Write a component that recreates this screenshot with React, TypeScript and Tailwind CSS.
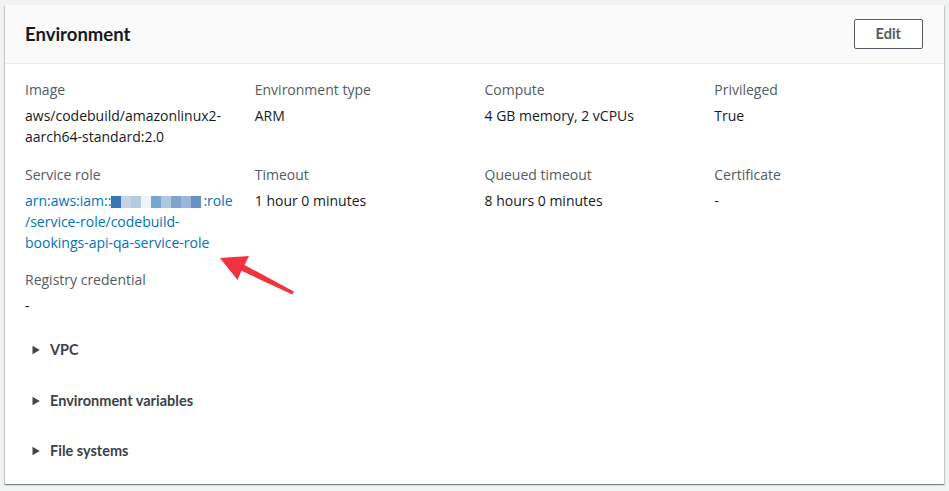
import React from "react";

const font = { fontFamily: '"Open Sans", "Noto Sans", Arial, sans-serif' };
const bold = { fontFamily: 'Lato, "Open Sans", Arial, sans-serif' };

function Field({ label, children }: { label: string; children: React.ReactNode }) {
  return (
    <div>
      <div className="text-[14px] leading-[22px] text-[#545b64] mb-[4px]">{label}</div>
      <div className="text-[14px] leading-[21px] text-[#16191f]">{children}</div>
    </div>
  );
}

function Expander({ label }: { label: string }) {
  return (
    <div className="flex items-center h-[22px]">
      <svg width="8" height="10" viewBox="0 0 8 10" className="ml-[7px] mr-[10px]">
        <path d="M0.5 0.8 L7.8 5 L0.5 9.2 Z" fill="#414750" />
      </svg>
      <span className="text-[14.5px] font-bold text-[#3b4148]" style={bold}>{label}</span>
    </div>
  );
}

const blocks = [
  "#3a76b6",
  "#c3d4e8",
  "#b6c9e1",
  "#eef3f9",
  "#78a5d0",
  "#abc7e2",
  "#81a2cc",
  "#9db6d8",
  "#6890c3",
];

export default function App() {
  return (
    <div className="relative bg-[#f2f3f3] h-[491px] pt-[5px] px-[5px]" style={font}>
      <div className="bg-white shadow-[0_1px_1px_0_rgba(0,28,36,0.3),1px_1px_1px_0_rgba(0,28,36,0.15),-1px_1px_1px_0_rgba(0,28,36,0.15)]">
        <div className="h-[59px] bg-[#fafafa] border-b border-[#eaeded] flex items-center justify-between pl-5 pr-[21px]">
          <h2 className="text-[18.5px] font-bold text-[#16191f] leading-[24px]" style={bold}>Environment</h2>
          <button
            className="h-[30px] px-[21px] border border-[#545b64] rounded-[2px] bg-white text-[14.5px] font-bold text-[#545b64] leading-none"
            style={bold}
          >
            Edit
          </button>
        </div>
        <div className="px-5 pt-[15px] pb-[22px]">
          <div className="grid grid-cols-4 gap-x-5 gap-y-[16.5px]">
            <Field label="Image">
              aws/codebuild/amazonlinux2-
              <br />
              aarch64-standard:2.0
            </Field>
            <Field label="Environment type">ARM</Field>
            <Field label="Compute">4 GB memory, 2 vCPUs</Field>
            <Field label="Privileged">True</Field>
            <Field label="Service role">
              <a className="text-[#0073bb]">
                <span className="whitespace-nowrap">
                  arn:aws:iam::
                  <span className="inline-flex align-[-2px] h-[12px]">
                    {blocks.map((c, i) => (
                      <span key={i} className="inline-block w-[10px] h-[12px]" style={{ backgroundColor: c }} />
                    ))}
                    <span className="inline-block w-[2px] h-[12px] bg-[#f6f8fb]" />
                  </span>
                  :role
                </span>
                <br />
                /service-role/codebuild-
                <br />
                bookings-api-qa-service-role
              </a>
            </Field>
            <Field label="Timeout">1 hour 0 minutes</Field>
            <Field label="Queued timeout">8 hours 0 minutes</Field>
            <Field label="Certificate">-</Field>
            <Field label="Registry credential">-</Field>
          </div>
          <div className="mt-[23px] flex flex-col gap-[28.5px]">
            <Expander label="VPC" />
            <Expander label="Environment variables" />
            <Expander label="File systems" />
          </div>
        </div>
      </div>
      <svg className="absolute left-0 top-0 pointer-events-none" width="949" height="491">
        <polygon
          points="220,258 249,256 244.5,265 293.8,291.4 292.4,294.6 241.5,270.8 237.5,280"
          fill="#f2323f"
        />
      </svg>
    </div>
  );
}
